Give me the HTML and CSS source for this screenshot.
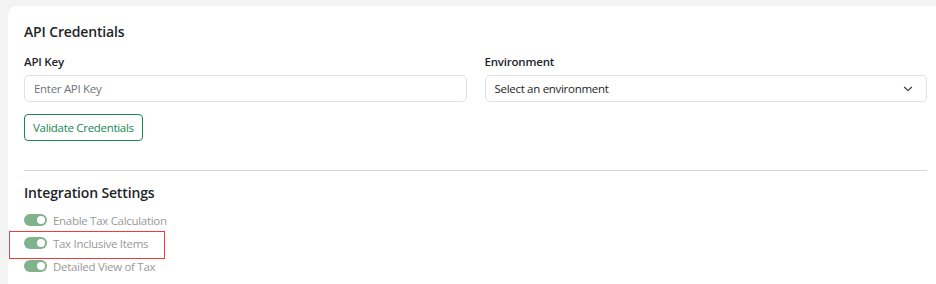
FILE: index.html
```html
<!DOCTYPE html>
<html>
<head>
<meta charset="utf-8">
<link rel="stylesheet" href="styles.css">
</head>
<body>
<div class="card">
  <h2 class="section-title">API Credentials</h2>
  <div class="row">
    <div class="field">
      <label class="label">API Key</label>
      <div class="input placeholder">Enter API Key</div>
    </div>
    <div class="field">
      <label class="label">Environment</label>
      <div class="input select">
        <span>Select an environment</span>
        <svg class="chev" width="10" height="6" viewBox="0 0 10 6"><path d="M1.5 1.2 L5 4.6 L8.5 1.2" fill="none" stroke="#444" stroke-width="1.3" stroke-linecap="round" stroke-linejoin="round"/></svg>
      </div>
    </div>
  </div>
  <button class="btn-outline">Validate Credentials</button>
  <hr class="divider">
  <h2 class="section-title tight">Integration Settings</h2>
  <div class="switches">
    <div class="switch-row"><span class="switch"><span class="knob"></span></span><span class="switch-label">Enable Tax Calculation</span></div>
    <div class="switch-row highlighted"><span class="switch"><span class="knob"></span></span><span class="switch-label">Tax Inclusive Items</span><span class="highlight-box"></span></div>
    <div class="switch-row"><span class="switch"><span class="knob"></span></span><span class="switch-label">Detailed View of Tax</span></div>
  </div>
</div>
</body>
</html>
```
FILE: styles.css
```css
html, body {
  overflow: hidden;
}
body {
  margin: 6px 0 0 8px;
  background: #f3f3f3;
  font-family: "Open Sans", "Noto Sans", sans-serif;
  color: #212529;
}
.card {
  width: 903px;
  background: #fff;
  border-radius: 8px;
  box-shadow: 0 0 6px rgba(0,0,0,0.06);
  padding: 16px 16px 40px 16px;
}
.section-title {
  font-size: 14px;
  font-weight: 600;
  letter-spacing: -0.15px;
  margin: 0 0 12px 0;
  line-height: 20px;
}
.section-title.tight {
  margin-bottom: 8px;
}
.row {
  display: flex;
  gap: 18px;
}
.field {
  flex: 1;
  display: flex;
  flex-direction: column;
}
.label {
  font-size: 11.5px;
  font-weight: 600;
  letter-spacing: -0.2px;
  line-height: 16px;
  margin-bottom: 5px;
}
.input {
  height: 27px;
  box-sizing: border-box;
  border: 1px solid #dee2e6;
  border-radius: 5px;
  padding: 0 9px;
  font-size: 11.5px;
  letter-spacing: -0.3px;
  display: flex;
  align-items: center;
}
.placeholder {
  color: #6c757d;
}
.select {
  justify-content: space-between;
  color: #212529;
}
.chev {
  margin-right: 4px;
}
.btn-outline {
  margin-top: 12px;
  height: 27px;
  padding: 0 8px;
  background: #fff;
  border: 1px solid #198754;
  border-radius: 4px;
  color: #198754;
  font-family: inherit;
  font-size: 11.5px;
  letter-spacing: -0.3px;
}
.divider {
  border: 0;
  border-top: 1px solid #d5d5d5;
  margin: 29px 0 12px 0;
}
.switches {
  display: flex;
  flex-direction: column;
  gap: 5px;
}
.switch-row {
  display: flex;
  align-items: center;
  gap: 6px;
  height: 18px;
  position: relative;
}
.highlight-box {
  position: absolute;
  left: -15px;
  top: -3px;
  width: 154px;
  height: 26px;
  border: 1px solid #ef3b3b;
  pointer-events: none;
}
.switch {
  width: 23px;
  height: 12px;
  border-radius: 6px;
  background: #80b38c;
  position: relative;
}
.knob {
  position: absolute;
  right: 2px;
  top: 2px;
  width: 8px;
  height: 8px;
  border-radius: 50%;
  background: #fff;
}
.switch-label {
  font-size: 11.5px;
  letter-spacing: -0.3px;
  color: #999;
}
```
